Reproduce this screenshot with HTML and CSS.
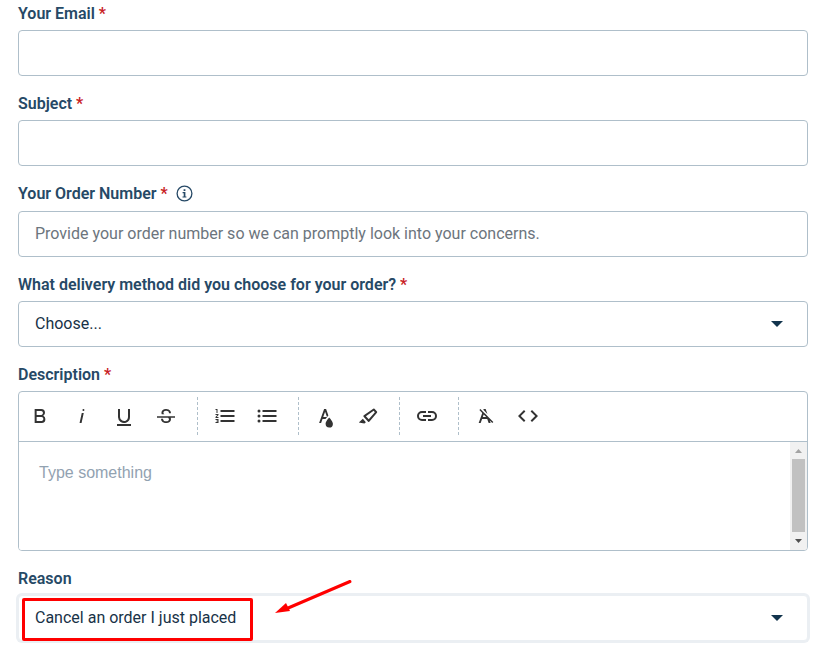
FILE: index.html
```html
<!DOCTYPE html>
<html lang="en">
<head>
    <meta charset="UTF-8">
    <meta name="viewport" content="width=device-width, initial-scale=1.0">
    <title>Submit a Request</title>
    <link rel="stylesheet" href="styles.css">
</head>
<body>
    <form class="request-form">
        <div class="form-group">
            <label for="email">Your Email <span class="required">*</span></label>
            <input type="email" id="email" name="email" class="control">
        </div>

        <div class="form-group">
            <label for="subject">Subject <span class="required">*</span></label>
            <input type="text" id="subject" name="subject" class="control">
        </div>

        <div class="form-group">
            <div class="label-row">
                <label for="order">Your Order Number <span class="required">*</span></label>
                <svg class="info-icon" viewBox="0 0 17 17" aria-hidden="true">
                    <circle cx="8.5" cy="8.5" r="7.4" fill="none" stroke="currentColor" stroke-width="1.3"/>
                    <path d="M7.6 4.3h1.8v1.6H7.6zM6.6 7h2.8v4.4h1v1.2H6.5v-1.2h1.2V8.2H6.6z" fill="currentColor"/>
                </svg>
            </div>
            <input type="text" id="order" name="order" class="control" placeholder="Provide your order number so we can promptly look into your concerns.">
        </div>

        <div class="form-group">
            <label for="delivery">What delivery method did you choose for your order? <span class="required">*</span></label>
            <div class="select-wrap">
                <select id="delivery" name="delivery" class="control">
                    <option value="">Choose...</option>
                </select>
                <svg class="caret" viewBox="0 0 12 6" aria-hidden="true"><path d="M0 0h12L6 6z"/></svg>
            </div>
        </div>

        <div class="form-group">
            <label for="description">Description <span class="required">*</span></label>
            <div class="editor">
                <div class="toolbar">
                    <button type="button" aria-label="Bold"><svg viewBox="0 0 24 24"><path d="M15.25,11.8h0A3.68,3.68,0,0,0,17,9a3.93,3.93,0,0,0-3.86-4H6.65V19h7a3.74,3.74,0,0,0,3.7-3.78V15.1A3.64,3.64,0,0,0,15.25,11.8ZM8.65,7h4.2a2.09,2.09,0,0,1,2,1.3,2.09,2.09,0,0,1-1.37,2.61,2.23,2.23,0,0,1-.63.09H8.65Zm4.6,10H8.65V13h4.6a2.09,2.09,0,0,1,2,1.3,2.09,2.09,0,0,1-1.37,2.61A2.23,2.23,0,0,1,13.25,17Z"/></svg></button>
                    <button type="button" aria-label="Italic"><svg viewBox="0 0 24 24"><path d="M11.76,9h2l-2.2,10h-2Zm1.68-4a1,1,0,1,0,1,1,1,1,0,0,0-1-1Z"/></svg></button>
                    <button type="button" aria-label="Underline"><svg viewBox="0 0 24 24"><path d="M19,20v2H5V20Zm-3-6.785a4,4,0,0,1-5.74,3.4A3.75,3.75,0,0,1,8,13.085V5.005H6v8.21a6,6,0,0,0,8,5.44,5.851,5.851,0,0,0,4-5.65v-8H16Z"/></svg></button>
                    <button type="button" aria-label="Strikethrough"><svg viewBox="0 0 24 24"><path d="M3,12.20294H21v1.5H16.63422a3.59782,3.59782,0,0,1,.34942,1.5929,3.252,3.252,0,0,1-1.31427,2.6997A5.55082,5.55082,0,0,1,12.20251,19a6.4421,6.4421,0,0,1-2.62335-.539,4.46335,4.46335,0,0,1-1.89264-1.48816,3.668,3.668,0,0,1-.67016-2.15546V14.704H9.02v.11334a2.18275,2.18275,0,0,0,.85413,1.83069,3.69,3.69,0,0,0,2.32836.67926,3.38778,3.38778,0,0,0,2.07666-.5462,1.73346,1.73346,0,0,0,.7013-1.46655,1.69749,1.69749,0,0,0-.647-1.43439,3.00525,3.00525,0,0,0-.27491-.17725H3ZM16.34473,7.05981A4.18163,4.18163,0,0,0,14.6236,5.5462,5.627,5.627,0,0,0,12.11072,5,5.16083,5.16083,0,0,0,8.74719,6.06213,3.36315,3.36315,0,0,0,7.44006,8.76855a3.22923,3.22923,0,0,0,.3216,1.42786h2.59668c-.08338-.05365-.18537-.10577-.25269-.16064a1.60652,1.60652,0,0,1-.65283-1.30036,1.79843,1.79843,0,0,1,.68842-1.5108,3.12971,3.12971,0,0,1,1.96948-.55243,3.04779,3.04779,0,0,1,2.106.6687,2.35066,2.35066,0,0,1,.736,1.83258v.11341h2.00317V9.17346A3.90013,3.90013,0,0,0,16.34473,7.05981Z"/></svg></button>
                    <span class="separator"></span>
                    <button type="button" aria-label="Ordered list"><svg viewBox="0 0 24 24"><path d="M2.5,16h2v.5h-1v1h1V18h-2v1h3V15h-3Zm1-7h1V5h-2V6h1Zm-1,2H4.3L2.5,13.1V14h3V13H3.7l1.8-2.1V10h-3Zm5-5V8h14V6Zm0,12h14V16H7.5Zm0-5h14V11H7.5Z"/></svg></button>
                    <button type="button" aria-label="Unordered list"><svg viewBox="0 0 24 24"><path d="M7.5,6H21.5V8H7.5Zm0,5H21.5v2H7.5Zm0,5H21.5v2H7.5Z"/><circle cx="4" cy="7" r="1.5"/><circle cx="4" cy="12" r="1.5"/><circle cx="4" cy="17" r="1.5"/></svg></button>
                    <span class="separator"></span>
                    <button type="button" aria-label="Text color"><svg viewBox="0 0 24 24"><path d="M15.2,13.494s-3.6,3.9-3.6,6.3a3.65,3.65,0,0,0,7.3.1v-.1C18.9,17.394,15.2,13.494,15.2,13.494Zm-1.47-1.357.669-.724L12.1,5h-2l-5,14h2l1.43-4h2.943A24.426,24.426,0,0,1,13.726,12.137ZM11.1,7.8l1.86,5.2H9.244Z"/></svg></button>
                    <button type="button" aria-label="Background color"><svg viewBox="0 0 24 24"><path d="M9.91752,12.24082l7.74791-5.39017,1.17942,1.29591-6.094,7.20747L9.91752,12.24082M7.58741,12.652l4.53533,4.98327a.93412.93412,0,0,0,1.39531-.0909L20.96943,8.7314A.90827.90827,0,0,0,20.99075,7.533l-2.513-2.76116a.90827.90827,0,0,0-1.19509-.09132L7.809,11.27135A.93412.93412,0,0,0,7.58741,12.652ZM2.7939,18.52772,8.41126,19.5l1.47913-1.34617-3.02889-3.328Z"/></svg></button>
                    <span class="separator"></span>
                    <button type="button" aria-label="Insert link"><svg viewBox="0 0 24 24"><path d="M11,17H7A5,5,0,0,1,7,7h4V9H7a3,3,0,0,0,0,6h4ZM17,7H13V9h4a3,3,0,0,1,0,6H13v2h4A5,5,0,0,0,17,7Zm-1,4H8v2h8Z"/></svg></button>
                    <span class="separator"></span>
                    <button type="button" aria-label="Clear formatting"><svg viewBox="0 0 24 24"><path d="M11.48,10.09l-1.2-1.21L8.8,7.41,6.43,5,5.37,6.1,8.25,9,4.66,19h2l1.43-4h5.14l1.43,4h2l-.89-2.51L18.27,19l1.07-1.06L14.59,13.2ZM8.8,13l.92-2.56L12.27,13Zm.56-7.15L9.66,5h2l1.75,4.9Z"/></svg></button>
                    <button type="button" aria-label="Code view"><svg viewBox="0 0 24 24"><path d="M9.4,16.6,4.8,12,9.4,7.4,8,6,2,12l6,6Zm5.2,0L19.2,12,14.6,7.4,16,6l6,6-6,6Z"/></svg></button>
                </div>
                <div class="editor-body">
                    <textarea id="description" name="description" placeholder="Type something"></textarea>
                    <div class="scrollbar" aria-hidden="true">
                        <svg class="scroll-arrow up" viewBox="0 0 17 17"><path d="M5 11h7L8.5 7z"/></svg>
                        <div class="thumb"></div>
                        <svg class="scroll-arrow" viewBox="0 0 17 17"><path d="M5 6h7l-3.5 4z"/></svg>
                    </div>
                </div>
            </div>
        </div>

        <div class="form-group">
            <label for="reason">Reason</label>
            <div class="select-wrap active">
                <select id="reason" name="reason" class="control">
                    <option>Cancel an order I just placed</option>
                </select>
                <svg class="caret" viewBox="0 0 12 6" aria-hidden="true"><path d="M0 0h12L6 6z"/></svg>
                <div class="highlight"></div>
                <svg class="pointer" viewBox="0 0 78 36" aria-hidden="true">
                    <path d="M75 2.5L12 29.5" fill="none" stroke="#f00" stroke-width="3" stroke-linecap="round"/>
                    <path d="M0 34L11 24l4 8z" fill="#f00"/>
                </svg>
            </div>
        </div>
    </form>
</body>
</html>
```
FILE: styles.css
```css
* {
    box-sizing: border-box;
}

body {
    margin: 0;
    background-color: #fff;
    color: #183247;
    font-family: Roboto, Arial, sans-serif;
    font-size: 16px;
}

.request-form {
    padding: 2px 22px 12px 18px;
}

.form-group {
    margin-bottom: 16px;
}

label {
    display: block;
    line-height: 24px;
    margin-bottom: 4px;
    color: #264966;
    font-weight: 600;
}

.required {
    color: #c82124;
}

.label-row {
    display: flex;
    gap: 8px;
    margin-bottom: 5px;
}

.label-row label {
    margin-bottom: 0;
}

.info-icon {
    width: 17px;
    height: 17px;
    margin-top: 3px;
    color: #264966;
}

.control {
    display: block;
    width: 100%;
    height: 46px;
    padding: 0 16px 2px;
    border: 1px solid #afbfca;
    border-radius: 4px;
    background-color: #fff;
    color: #183247;
    font-family: inherit;
    font-size: 16px;
    appearance: none;
}

.control::placeholder {
    color: #6c757d;
    opacity: 1;
}

.select-wrap {
    display: grid;
    position: relative;
    align-items: center;
}

.select-wrap .control,
.caret {
    grid-area: 1 / 1;
}

.caret {
    width: 12px;
    height: 6px;
    margin-right: 25px;
    justify-self: end;
    fill: #12344d;
    pointer-events: none;
}

.active .control {
    border-color: #ebeff3;
    box-shadow: 0 0 0 2px #ebeff3;
}

.editor {
    border: 1px solid #afbfca;
    border-radius: 4px;
    overflow: hidden;
}

.toolbar {
    display: flex;
    align-items: center;
    height: 50px;
    padding-bottom: 1px;
    border-bottom: 1px solid #afbfca;
}

.toolbar button {
    display: flex;
    align-items: center;
    justify-content: center;
    width: 42px;
    height: 38px;
    padding: 0;
    border: none;
    background: none;
    cursor: pointer;
}

.toolbar svg {
    width: 24px;
    height: 24px;
    fill: #333;
}

.separator {
    height: 38px;
    margin: 0 6px 0 10px;
    border-left: 1px dashed #afbfca;
}

.editor-body {
    display: flex;
    height: 108px;
}

textarea {
    flex: 1;
    min-width: 0;
    padding: 20px;
    border: none;
    resize: none;
    font-family: "Liberation Sans", Arial, sans-serif;
    font-size: 16px;
    line-height: 22px;
}

textarea::placeholder {
    color: #92a2b1;
    opacity: 1;
}

.scrollbar {
    display: flex;
    flex-direction: column;
    width: 17px;
    background-color: #f1f1f1;
}

.scroll-arrow {
    width: 17px;
    height: 17px;
    fill: #505050;
}

.scroll-arrow.up {
    fill: #a3a3a3;
}

.thumb {
    flex: 1;
    margin: 0 2px 1px;
    background-color: #c1c1c1;
}

/* Callout drawn over the selected reason */
.highlight {
    position: absolute;
    top: 3px;
    left: 4px;
    width: 231px;
    height: 43px;
    border: 3px solid #f00;
    border-radius: 2px;
    pointer-events: none;
}

.pointer {
    position: absolute;
    top: -16px;
    left: 257px;
    width: 78px;
    height: 36px;
    pointer-events: none;
}
```
